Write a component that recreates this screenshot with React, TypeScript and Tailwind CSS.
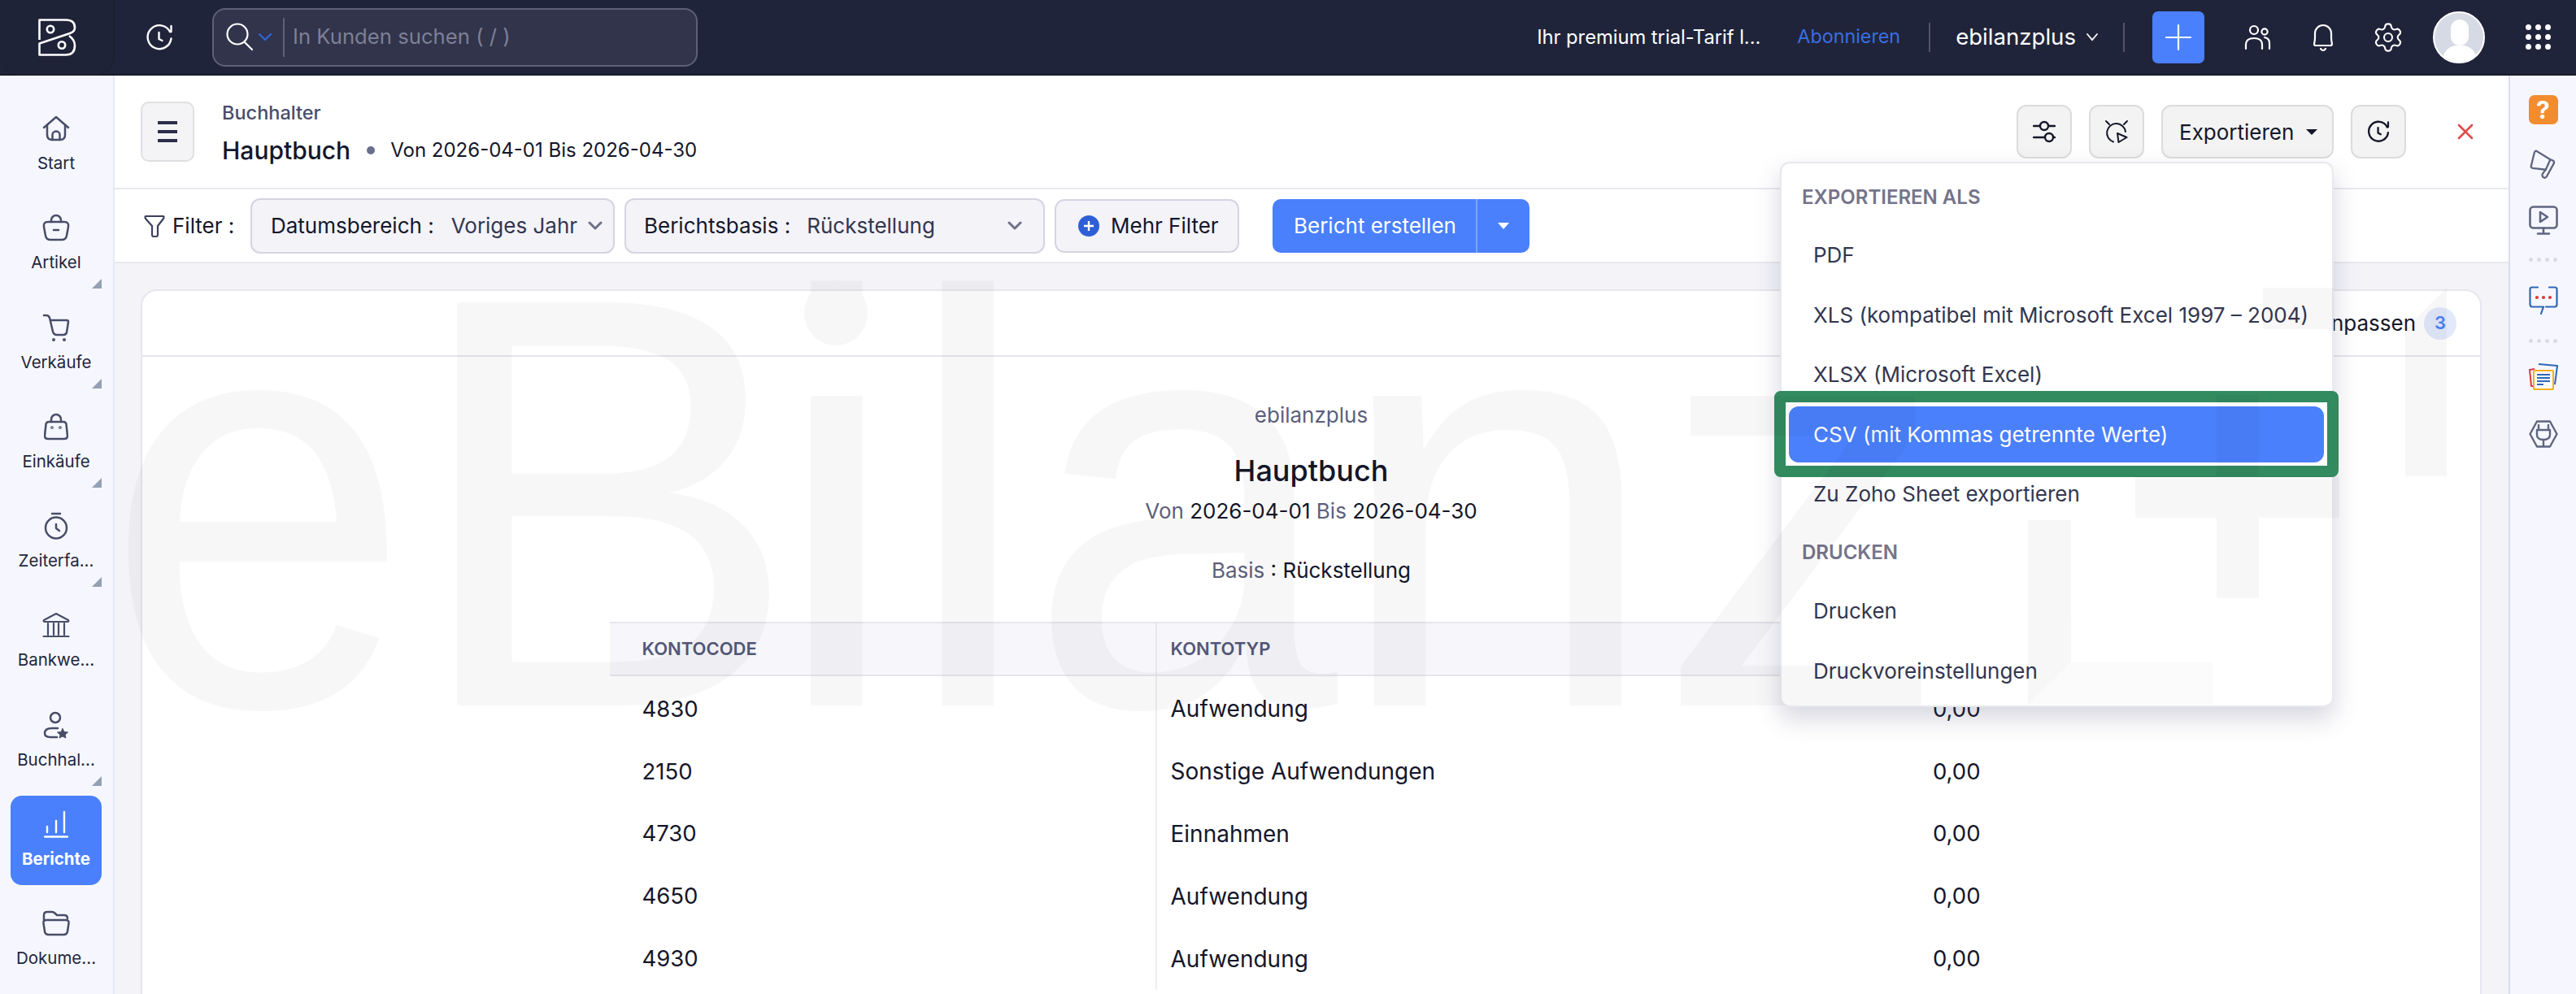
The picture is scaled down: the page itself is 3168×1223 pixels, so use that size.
import React from "react";
import { Settings } from "lucide-react";

const Stroke = ({ w, h, vb, color = "#484d68", sw = 2.5, children, className = "" }: { w: number; h: number; vb: string; color?: string; sw?: number; children: React.ReactNode; className?: string }) => (
  <svg width={w} height={h} viewBox={vb} fill="none" stroke={color} strokeWidth={sw} strokeLinecap="round" strokeLinejoin="round" className={className}>
    {children}
  </svg>
);

const HistoryIcon = ({ color = "#fff", size = 34, sw = 2.4 }: { color?: string; size?: number; sw?: number }) => (
  <Stroke w={size} h={size} vb="0 0 34 34" color={color} sw={sw}>
    <path d="M30 10 A14.5 14.5 0 1 0 31.5 18.5" />
    <path d="M31.5 3 V10 H30" />
    <path d="M16.5 11 V19 L20.5 21" />
  </Stroke>
);

const items: { label: string; icon: React.ReactNode; tri?: boolean; active?: boolean }[] = [
  {
    label: "Start",
    icon: (
      <Stroke w={34} h={32} vb="0 0 34 32">
        <path d="M2 15 L17 2 L32 15" />
        <path d="M6 12 V24 Q6 30 12 30 H22 Q28 30 28 24 V12" />
        <path d="M12.5 30 V24 a4.5 4.5 0 0 1 9 0 V30" />
      </Stroke>
    ),
  },
  {
    label: "Artikel",
    tri: true,
    icon: (
      <Stroke w={34} h={34} vb="0 0 34 34">
        <path d="M7 10 H27 Q33 10 32 16 L30 27 Q29 32 24 32 H10 Q5 32 4 27 L2 16 Q1 10 7 10 Z" />
        <path d="M11 10 V8 a6 6 0 0 1 12 0 V10" />
        <path d="M14 20 H20" />
      </Stroke>
    ),
  },
  {
    label: "Verkäufe",
    tri: true,
    icon: (
      <Stroke w={34} h={34} vb="0 0 34 34">
        <path d="M2 2 H5 Q8 2 9 5 L13 22 Q14 26 18 26 H26 Q29 26 30 23 L32 10 Q32 8 30 8 H10" />
        <circle cx="14" cy="32" r="0.8" />
        <circle cx="27" cy="32" r="0.8" />
      </Stroke>
    ),
  },
  {
    label: "Einkäufe",
    tri: true,
    icon: (
      <Stroke w={30} h={34} vb="0 0 30 34">
        <path d="M6 11 H24 Q27 11 27.5 14 L29 28 Q29 32 25 32 H5 Q1 32 1 28 L2.5 14 Q3 11 6 11 Z" />
        <path d="M9 11 V8 a6 6 0 0 1 12 0 V11" />
        <circle cx="10" cy="18" r="0.6" />
        <circle cx="20" cy="18" r="0.6" />
      </Stroke>
    ),
  },
  {
    label: "Zeiterfa...",
    tri: true,
    icon: (
      <Stroke w={30} h={34} vb="0 0 30 34">
        <circle cx="15" cy="19.5" r="13" />
        <path d="M10 2 H20" />
        <path d="M15 15 V20 L19 23" />
      </Stroke>
    ),
  },
  {
    label: "Bankwe...",
    icon: (
      <Stroke w={34} h={34} vb="0 0 34 34" sw={2.2}>
        <path d="M2 11 L17 3 L32 11 Q33 13 31 13 H3 Q1 13 2 11 Z" />
        <path d="M7 15 V29 M14 15 V29 M20 15 V29 M27 15 V29" />
        <path d="M1.5 31 H32.5" />
      </Stroke>
    ),
  },
  {
    label: "Buchhal...",
    tri: true,
    icon: (
      <Stroke w={32} h={34} vb="0 0 32 34">
        <circle cx="15" cy="8" r="6" />
        <path d="M18 21 H11 Q2 21 2 27 Q2 32 9 32 H17" />
        <path d="M24 21.5 L26 25.5 L30.5 26 L27 29 L28 33 L24 31 L20 33 L21 29 L17.5 26 L22 25.5 Z" fill="#484d68" strokeWidth="1" />
      </Stroke>
    ),
  },
  {
    label: "Berichte",
    active: true,
    icon: (
      <Stroke w={30} h={34} vb="0 0 30 34" color="#fff" sw={2.4}>
        <path d="M4 20 V27 M15 13 V27 M25 2 V27" />
        <path d="M1 32.5 H29" />
      </Stroke>
    ),
  },
  {
    label: "Dokume...",
    icon: (
      <Stroke w={34} h={32} vb="0 0 34 32">
        <path d="M2 13 V6 Q2 2 6 2 H12 Q14 2 16 4 L18 6 H27 Q31 6 31 10" />
        <path d="M5 12 H29 Q33 12 32.5 16 L31 26 Q30.5 30 26 30 H8 Q3.5 30 3 26 L1.5 16 Q1 12 5 12 Z" />
      </Stroke>
    ),
  },
];

const Sidebar = () => (
  <aside className="w-[141px] shrink-0 border-r-2 border-[#e7e8f5] bg-[#f6f7fe] pl-[13px] pt-[30px]">
    {items.map((it) => (
      <div
        key={it.label}
        className={`relative mb-[12.3px] flex h-[110px] w-[112px] flex-col items-center rounded-[14px] ${it.active ? "bg-[#4a80fc]" : ""}`}
      >
        <div className="mt-[17px] flex h-[36px] items-center justify-center">{it.icon}</div>
        <div className={`mt-[12px] h-[26px] whitespace-nowrap text-[20.5px] leading-[26px] ${it.active ? "font-bold text-white" : "text-[#22263d]"}`}>{it.label}</div>
        {it.tri && <div className="absolute bottom-0 right-0 h-0 w-0 border-b-[12px] border-l-[12px] border-b-[#94a0b4] border-l-transparent" />}
      </div>
    ))}
  </aside>
);

const TopBar = () => (
  <header className="flex h-[93px] shrink-0 items-center border-b-2 border-[#181b2c] bg-[#20243a]">
    <div className="flex h-[93px] w-[141px] shrink-0 items-center justify-center rounded-b-[22px] border-r-2 border-[#1c2033] bg-[#1f2338]">
      <svg width="50" height="50" viewBox="44 20 50 50" fill="none" stroke="#fff" strokeWidth="2.6" strokeLinejoin="round">
        <path d="M47.5 48 V23.5 H80 Q91 23.5 91 33 Q91 38 85 40 L47.5 52.5 V66.5 H80 Q91 66.5 91 55 Q91 48 84 43" />
        <circle cx="61" cy="35" r="4.2" />
        <circle cx="75" cy="54.5" r="4.2" />
      </svg>
    </div>
    <div className="ml-[38px] flex h-[34px] w-[34px] items-center justify-center">
      <HistoryIcon />
    </div>
    <div className="ml-[48px] flex h-[72px] w-[597px] items-center rounded-[16px] border-2 border-[#5d6079] bg-[#31344a] pl-[15px]">
      <svg width="34" height="36" viewBox="0 0 34 36" fill="none" stroke="#fff" strokeWidth="2.2" strokeLinecap="round">
        <circle cx="14" cy="14" r="12.5" />
        <path d="M23 24 L32 33" />
      </svg>
      <svg width="18" height="12" viewBox="0 0 18 12" fill="none" stroke="#2f66e0" strokeWidth="2.2" className="ml-[5px]" strokeLinecap="round">
        <path d="M2 2 L9 9 L16 2" />
      </svg>
      <div className="ml-[13px] h-[48px] w-[2px] bg-[#5d6079]" />
      <span className="ml-[10px] text-[25.7px] text-[#7d8098]">In Kunden suchen ( / )</span>
    </div>
    <div className="ml-auto flex items-center pr-[31px]">
      <span className="whitespace-nowrap text-[23.7px] text-white">Ihr premium trial-Tarif l...</span>
      <span className="ml-[45px] whitespace-nowrap text-[23.3px] text-[#3a6ee2]">Abonnieren</span>
      <div className="ml-[35px] h-[36px] w-[2px] bg-[#50536a]" />
      <span className="ml-[31px] whitespace-nowrap text-[27.6px] text-white">ebilanzplus</span>
      <svg width="16" height="12" viewBox="0 0 16 12" fill="none" stroke="#fff" strokeWidth="1.8" className="ml-[12px]" strokeLinecap="round">
        <path d="M2 2 L8 9 L14 2" />
      </svg>
      <div className="ml-[30px] h-[36px] w-[2px] bg-[#50536a]" />
      <div className="ml-[34px] flex h-[64px] w-[64px] items-center justify-center rounded-[7px] bg-[#4a80fc]">
        <svg width="34" height="34" viewBox="0 0 34 34" stroke="#fff" strokeWidth="2.2" strokeLinecap="round">
          <path d="M17 2 V32 M2 17 H32" />
        </svg>
      </div>
      <div className="ml-[48px] flex w-[34px] justify-center">
        <Stroke w={34} h={32} vb="0 0 34 32" color="#fff" sw={2.2}>
          <circle cx="13" cy="7" r="5" />
          <circle cx="26" cy="9" r="3.6" />
          <path d="M3 30 V25 Q3 17 13 17 Q23 17 23 25 V30" />
          <path d="M26 16 Q32 17 32 23 V30" />
        </Stroke>
      </div>
      <div className="ml-[47px] flex w-[34px] justify-center">
        <Stroke w={30} h={36} vb="0 0 30 36" color="#fff" sw={2.2}>
          <path d="M4 26 Q5 22 5 18 V13 a10 10 0 0 1 20 0 V18 Q25 22 26 26 Q26 28 24 28 H6 Q4 28 4 26 Z" />
          <path d="M12 32 Q15 36 18 32" />
        </Stroke>
      </div>
      <div className="ml-[46px] flex w-[34px] justify-center">
        <Settings size={40} color="#fff" strokeWidth={1.25} className="shrink-0" />
      </div>
      <div className="relative ml-[38px] h-[64px] w-[64px] overflow-hidden rounded-full border-2 border-white bg-[#d5dae5]">
        <div className="absolute left-[20px] top-[8px] h-[32px] w-[22px] rounded-full bg-white" />
        <div className="absolute left-[10px] top-[40px] h-[30px] w-[42px] rounded-t-[18px] bg-white" />
      </div>
      <div className="ml-[50px] grid w-[31px] grid-cols-3 gap-[5px]">
        {Array.from({ length: 9 }).map((_, i) => (
          <div key={i} className="h-[7px] w-[7px] rounded-full bg-white" />
        ))}
      </div>
    </div>
  </header>
);

const SquareBtn = ({ children }: { children: React.ReactNode }) => (
  <div className="flex h-[66px] w-[68px] items-center justify-center rounded-[12px] border-2 border-[#dcdcdc] bg-[#f3f3f3]">{children}</div>
);

const PageHeader = () => (
  <div className="flex h-[140px] shrink-0 items-center border-b-2 border-[#e8e8ef] bg-white pl-[32px] pr-[43px]">
    <div className="flex h-[74px] w-[66px] items-center justify-center rounded-[10px] border-2 border-[#e0e0e4] bg-[#f4f4f6]">
      <div className="flex flex-col gap-[7px]">
        <div className="h-[4px] w-[24px] bg-[#2b2e4a]" />
        <div className="h-[4px] w-[24px] bg-[#2b2e4a]" />
        <div className="h-[4px] w-[24px] bg-[#2b2e4a]" />
      </div>
    </div>
    <div className="ml-[34px] flex flex-col pt-[1px]">
      <div className="h-[30px] text-[23.5px] font-medium leading-[30px] text-[#494d6b]">Buchhalter</div>
      <div className="mt-[14px] flex h-[34px] items-center">
        <span className="text-[30px] font-medium leading-[34px] text-[#14162a]">Hauptbuch</span>
        <span className="ml-[20px] h-[10px] w-[10px] rounded-full bg-[#6a6f8e]" />
        <span className="ml-[19px] text-[24px] text-[#14162a]">Von 2026-04-01 Bis 2026-04-30</span>
      </div>
    </div>
    <div className="ml-auto flex items-center gap-[21px]">
      <SquareBtn>
        <Stroke w={28} h={28} vb="0 0 28 28" color="#15172a" sw={2.4}>
          <path d="M1 7 H8 M20 7 H27 M1 21 H14 M26 21 H27" />
          <circle cx="14" cy="7" r="5" />
          <circle cx="20" cy="21" r="5" />
        </Stroke>
      </SquareBtn>
      <SquareBtn>
        <Stroke w={30} h={30} vb="0 0 30 30" color="#15172a" sw={2}>
          <path d="M11 27.5 A11.5 11.5 0 1 1 26 15" />
          <path d="M2 2 L6 6 M28 2 L24 6" />
          <path d="M16 17 L27.5 22 L17.5 28 Z" />
        </Stroke>
      </SquareBtn>
      <div className="flex h-[66px] w-[212px] items-center rounded-[12px] border-2 border-[#dcdcdc] bg-[#f3f3f3] pl-[20px]">
        <span className="text-[26px] text-[#15172a]">Exportieren</span>
        <span className="ml-[15px] h-0 w-0 border-x-[7px] border-t-[7px] border-x-transparent border-t-[#15172a]" />
      </div>
      <SquareBtn>
        <HistoryIcon color="#15172a" size={28} sw={2.8} />
      </SquareBtn>
      <svg width="20" height="20" viewBox="0 0 20 20" stroke="#e44a4a" strokeWidth="2.6" strokeLinecap="round" className="ml-[42px]">
        <path d="M2 2 L18 18 M18 2 L2 18" />
      </svg>
    </div>
  </div>
);

const Chev = ({ color = "#6d7088" }: { color?: string }) => (
  <svg width="18" height="12" viewBox="0 0 18 12" fill="none" stroke={color} strokeWidth="3" strokeLinecap="round" strokeLinejoin="round">
    <path d="M2 2 L9 9 L16 2" />
  </svg>
);

const FilterRow = () => (
  <div className="flex h-[91px] shrink-0 items-center border-b-2 border-[#e8e8ef] bg-white pl-[36px]">
    <Stroke w={26} h={28} vb="0 0 26 28" color="#3d405c" sw={2.2}>
      <path d="M2 2 H24 Q25 3 24 5 L17 14 V25 Q17 27 15 27 H12 Q10 27 10 25 V14 L2 5 Q1 3 2 2 Z" />
    </Stroke>
    <span className="ml-[9px] w-[96px] text-[26px] text-[#15172a]">Filter :</span>
    <div className="flex h-[68px] w-[448px] items-center rounded-[12px] border-2 border-[#d4d4e2] bg-[#f3f3f8] pl-[23px]">
      <span className="text-[26px] text-[#15172a]">Datumsbereich :</span>
      <span className="ml-[21px] text-[26px] text-[#33364f]">Voriges Jahr</span>
      <span className="ml-[13px]"><Chev /></span>
    </div>
    <div className="ml-[12px] flex h-[68px] w-[517px] items-center rounded-[12px] border-2 border-[#d4d4e2] bg-[#f3f3f8] pl-[22px] pr-[26px]">
      <span className="text-[26px] text-[#15172a]">Berichtsbasis :</span>
      <span className="ml-[20px] text-[26px] text-[#33364f]">Rückstellung</span>
      <span className="ml-auto"><Chev /></span>
    </div>
    <div className="ml-[12px] flex h-[66px] w-[227px] items-center rounded-[12px] border-2 border-[#d4d4e2] bg-[#f3f3f8] pl-[27px]">
      <div className="flex h-[26px] w-[26px] items-center justify-center rounded-full bg-[#2f5fd8]">
        <svg width="14" height="14" viewBox="0 0 14 14" stroke="#fff" strokeWidth="2.4"><path d="M7 1 V13 M1 7 H13" /></svg>
      </div>
      <span className="ml-[14px] text-[26px] text-[#15172a]">Mehr Filter</span>
    </div>
    <div className="ml-[41px] flex h-[66px] w-[316px] items-center rounded-[10px] bg-[#4a80fc]">
      <span className="w-[250px] pl-[26px] text-[26px] text-white">Bericht erstellen</span>
      <div className="h-full w-[2px] bg-[#7ea4fd]" />
      <span className="ml-[25px] h-0 w-0 border-x-[7px] border-t-[8px] border-x-transparent border-t-white" />
    </div>
  </div>
);

const rows = [
  ["4830", "Aufwendung"],
  ["2150", "Sonstige Aufwendungen"],
  ["4730", "Einnahmen"],
  ["4650", "Aufwendung"],
  ["4930", "Aufwendung"],
];

const Card = () => (
  <div className="flex-1 bg-[#f3f3f8] pl-[32px] pr-[33px] pt-[32px]">
    <div className="h-[900px] rounded-t-[20px] border-2 border-[#e6e6ee] bg-white">
      <div className="flex h-[81px] items-center justify-end border-b-2 border-[#e6e6ee] pr-[29px]">
        <div className="mr-[10px] h-[28px] w-[22px] rounded-[5px] border-2 border-[#a9acbd]" />
        <span className="text-[26px] text-[#15172a]">Spalten anpassen</span>
        <span className="ml-[10px] flex h-[40px] w-[40px] items-center justify-center rounded-full bg-[#e1e9fa] text-[22px] font-semibold text-[#4a80fc]">3</span>
      </div>
      <div className="flex flex-col items-center">
        <div className="mt-[54px] h-[36px] text-[26px] leading-[36px] text-[#5c5f7c]">ebilanzplus</div>
        <div className="mt-[28px] h-[44px] text-[36px] font-medium leading-[44px] text-[#14162a]">Hauptbuch</div>
        <div className="mt-[10px] h-[36px] text-[26px] leading-[36px] text-[#14162a]">
          <span className="text-[#5c5f7c]">Von</span> 2026-04-01 <span className="text-[#5c5f7c]">Bis</span> 2026-04-30
        </div>
        <div className="mt-[37px] h-[36px] text-[26px] leading-[36px] text-[#14162a]">
          <span className="text-[#5c5f7c]">Basis</span> : Rückstellung
        </div>
        <div className="mt-[45px] w-[1726px]">
          <div className="flex h-[67px] items-center border-y-2 border-[#e6e6ee] bg-[#f7f7fb] text-[22px] font-semibold text-[#55587a]">
            <div className="flex h-full w-[673px] items-center border-r-2 border-[#e6e6ee] pl-[40px]">KONTOCODE</div>
            <div className="pl-[17px]">KONTOTYP</div>
          </div>
          <div className="h-[2px] w-[673px] border-r-2 border-[#eeeef3]" />
          {rows.map((r, i) => (
            <div key={i} className="flex h-[76.8px] text-[28px] text-[#14162a]">
              <div className="flex h-full w-[673px] items-center border-r-2 border-[#eeeef3] pl-[40px] text-[27.5px]">{r[0]}</div>
              <div className="flex items-center pl-[17px]">{r[1]}</div>
              <div className="ml-auto flex items-center pr-[40px] text-[27.5px]">0,00</div>
            </div>
          ))}
        </div>
      </div>
    </div>
  </div>
);

const Dots = () => (
  <div className="flex justify-center gap-[5px]">
    {[0, 1, 2, 3].map((i) => (
      <div key={i} className="h-[5px] w-[5px] rounded-full bg-[#d9dae3]" />
    ))}
  </div>
);

const RightRail = () => (
  <aside className="flex w-[83px] shrink-0 flex-col items-center border-l-2 border-[#dcdcec] bg-[#f6f7fe] pt-[24px]">
    <div className="flex h-[36px] w-[36px] items-center justify-center rounded-[7px] bg-[#f28c2e] text-[30px] font-bold leading-none text-white">?</div>
    <div className="mt-[31px] flex h-[36px] items-center">
      <svg width="33" height="37" viewBox="185 283 100 112" fill="none" stroke="#5f6480" strokeWidth="7" strokeLinejoin="round" strokeLinecap="round">
        <path d="M210 288 L262 320 L245 358 L196 352 Q188 350 191 342 L203 293 Q205 287 210 288 Z" />
        <path d="M262 320 L272 324 Q278 328 275 335 L248 384 Q242 392 234 385 Q230 380 234 372 L245 358" />
      </svg>
    </div>
    <div className="mt-[32px] flex h-[38px] items-center">
      <Stroke w={36} h={36} vb="0 0 36 36" color="#5f6480" sw={2.6}>
        <rect x="1.5" y="1.5" width="33" height="26" rx="4" />
        <path d="M14 8 V20 L23 14 Z" />
        <path d="M18 28 V34 M11 34.5 H25" />
      </Stroke>
    </div>
    <div className="mt-[27px]"><Dots /></div>
    <div className="mt-[30px] flex h-[36px] items-center">
      <svg width="36" height="36" viewBox="0 0 36 36" fill="none" stroke="#2f66b8" strokeWidth="2.2" strokeLinecap="round" strokeLinejoin="round">
        <path d="M11 1.5 H4 Q1.5 1.5 1.5 4 V22 Q1.5 25.5 4 25.5 H18 L15 34" />
        <path d="M25 1.5 H32 Q34.5 1.5 34.5 4 V22 Q34.5 25.5 32 25.5 H21" />
        <circle cx="10" cy="14" r="1" fill="#d93a3a" stroke="#d93a3a" />
        <circle cx="18" cy="14" r="1" fill="#d93a3a" stroke="#d93a3a" />
        <circle cx="26" cy="14" r="1" fill="#d93a3a" stroke="#d93a3a" />
      </svg>
    </div>
    <div className="mt-[29px]"><Dots /></div>
    <div className="mt-[24px] flex h-[36px] items-center">
      <svg width="36" height="34" viewBox="0 0 36 34" fill="none" strokeWidth="2" strokeLinejoin="round">
        <path d="M7 7 L1 8 L3 28 L6 28" stroke="#d93a3a" />
        <path d="M12 1 L35 3 L32 26" stroke="#2f66b8" />
        <rect x="6" y="9" width="24" height="23" rx="1" stroke="#f4ae1e" fill="#fff" />
        <path d="M10 14 H26 M10 18 H26 M10 22 H26 M10 26 H18" stroke="#2f66b8" />
      </svg>
    </div>
    <div className="mt-[34px] flex h-[36px] items-center">
      <Stroke w={36} h={34} vb="0 0 36 34" color="#5f6480" sw={2.4}>
        <path d="M10 1.5 H26 L34.5 17 L26 32.5 H10 L1.5 17 Z" />
        <path d="M12 6 V12 M24 6 V12 M10 12 H26 V18 Q26 24 18 24 Q10 24 10 18 Z" />
        <path d="M18 24 V32" />
      </Stroke>
    </div>
  </aside>
);

const exportRows: { t: string; head?: string; on?: boolean }[] = [
  { t: "EXPORTIEREN ALS", head: "h-[68px]" },
  { t: "PDF" },
  { t: "XLS (kompatibel mit Microsoft Excel 1997 – 2004)" },
  { t: "XLSX (Microsoft Excel)" },
  { t: "CSV (mit Kommas getrennte Werte)", on: true },
  { t: "Zu Zoho Sheet exportieren" },
  { t: "DRUCKEN", head: "h-[70px]" },
  { t: "Drucken" },
  { t: "Druckvoreinstellungen" },
];

const ExportMenu = () => (
  <div className="absolute left-[2189px] top-[199px] h-[671px] w-[681px] rounded-[12px] border-2 border-[#e8e8ef] bg-white pt-[7.7px] shadow-[0_14px_30px_rgba(70,70,110,0.22)]">
    {exportRows.map((r) =>
      r.head ? (
        <div key={r.t} className={`flex items-center pl-[25px] text-[24px] font-semibold text-[#74748a] ${r.head}`}>{r.t}</div>
      ) : r.on ? (
        <div key={r.t} className="flex h-[73.6px] items-center pl-[9px] pr-[10px]">
          <div className="flex h-[69px] w-full items-center rounded-[12px] bg-[#4a80fc] pl-[30px] text-[26px] text-white">{r.t}</div>
        </div>
      ) : (
        <div key={r.t} className="flex h-[73.6px] items-center pl-[39px] text-[26px] text-[#33364f]">{r.t}</div>
      )
    )}
  </div>
);

const wmFont = "'Liberation Sans', sans-serif";

const Watermark = () => (
  <svg className="pointer-events-none absolute left-0 top-0" width="3168" height="1223" viewBox="0 0 3168 1223">
    <g fill="#000" opacity="0.028" fontSize="721" fontFamily={wmFont}>
      <text transform="translate(129 868) scale(0.94 1)">e</text>
      <text y="868" x="503 949 1110">Bil</text>
      <text transform="translate(1264 868) scale(0.95 1)">a</text>
      <text y="868" x="1640 2038">nz</text>
      <ellipse cx="1028" cy="385" rx="39" ry="40" />
      <path d="M2494 640 H2547 V815 L2494 867 Z" />
      <path d="M2626 586 H2726 V486 H2778 V586 H2877 V637 H2778 V736 H2726 V637 H2626 Z" />
      <path d="M2783 354 H2870 V405 H2783 Z" />
      <path d="M3009 354 V586 H2958 V405 Z" />
    </g>
    <path d="M2494 867 L2547 815 H2722 V867 Z" fill="#000" opacity="0.016" />
  </svg>
);

export default function App() {
  return (
    <div className="relative flex h-[1223px] w-[3168px] flex-col overflow-hidden bg-white [font-family:Inter,sans-serif]">
      <TopBar />
      <div className="flex min-h-0 flex-1">
        <Sidebar />
        <main className="flex min-w-0 flex-1 flex-col overflow-hidden">
          <PageHeader />
          <FilterRow />
          <Card />
        </main>
        <RightRail />
      </div>
      <ExportMenu />
      <div className="absolute left-[2182px] top-[481px] h-[106px] w-[694px] rounded-[8px] border-[14px] border-[#328a5f]" />
      <Watermark />
    </div>
  );
}
